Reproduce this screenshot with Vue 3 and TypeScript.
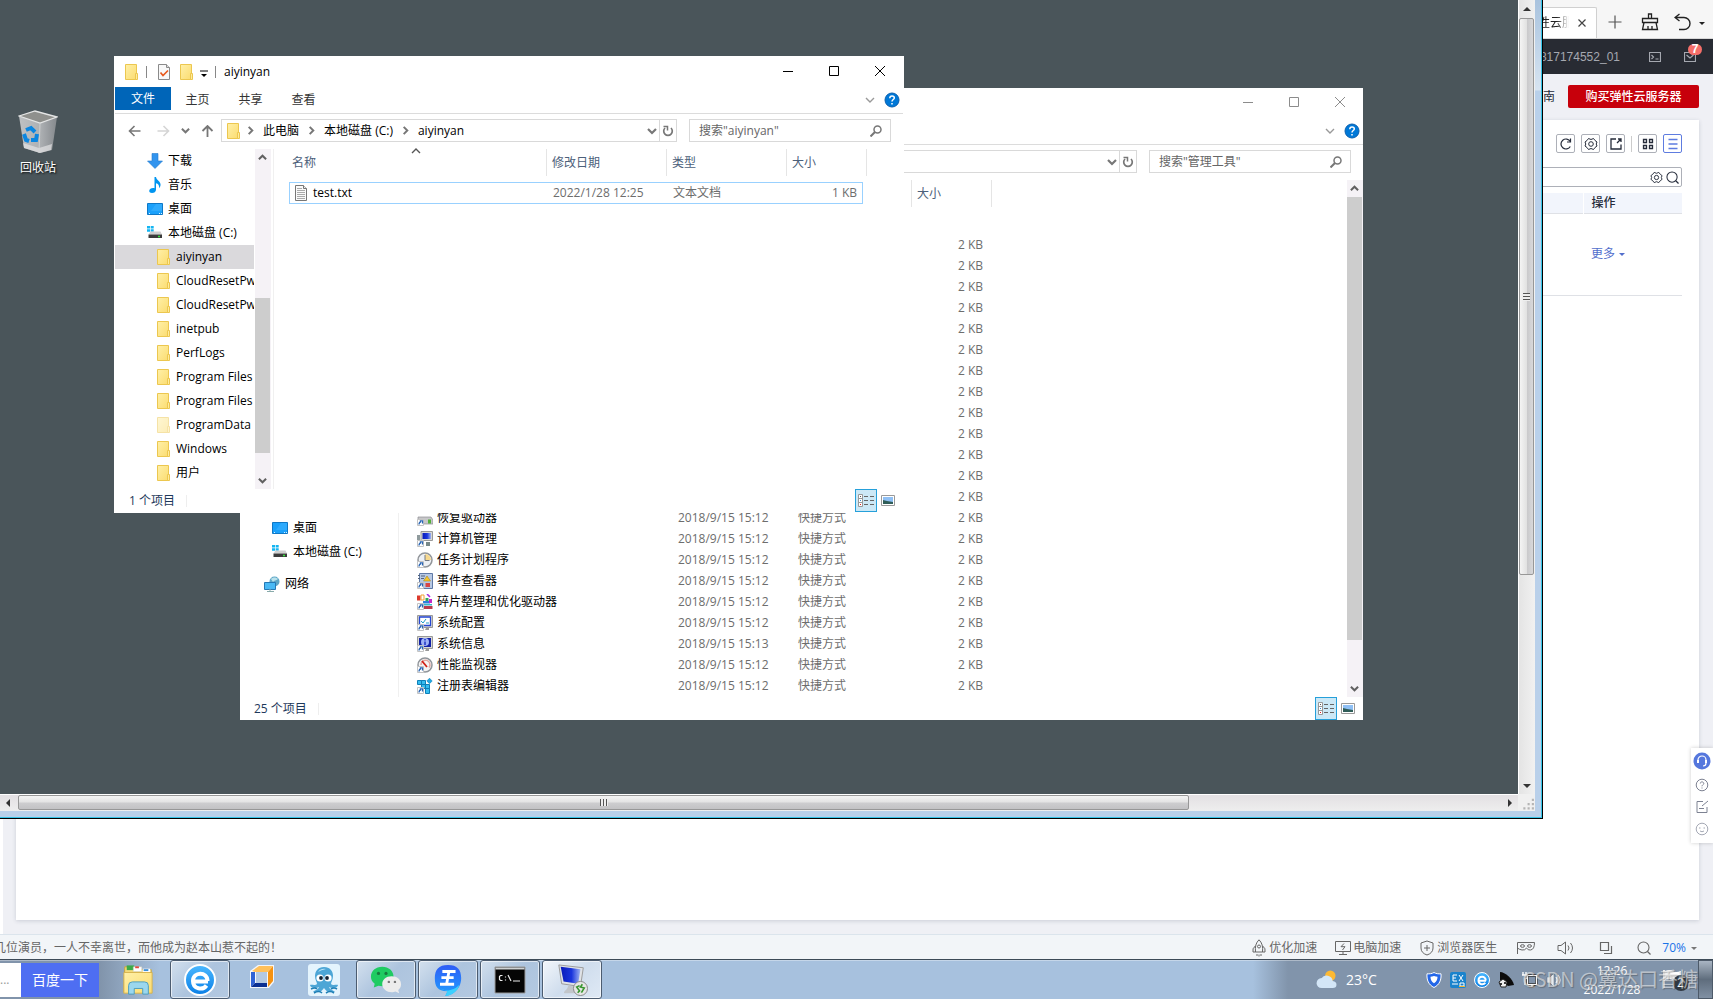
<script setup lang="ts">
interface NavItem {
  label: string
  icon: string
  level: 0 | 1 | 2
  selected?: boolean
  faded?: boolean
}
interface FileRow {
  name: string
  icon: string
  date: string
  type: string
  size: string
}
interface ExplorerWindow {
  id: string
  active: boolean
  title: string
  tabs: string[]
  crumbs: string[]
  search: string
  headers: string[]
  nav: NavItem[]
  rows: FileRow[]
  status: string
}

const folder = (label: string, extra: Partial<NavItem> = {}): NavItem => ({
  label, icon: 'folder', level: 2, ...extra,
})
const shortcut = (name: string, icon: string, minute = '12'): FileRow => ({
  name, icon, date: `2018/9/15 15:${minute}`, type: '快捷方式', size: '2 KB',
})
const sizeOnly = (): FileRow => ({ name: '', icon: '', date: '', type: '', size: '2 KB' })

const windows: ExplorerWindow[] = [
  {
    id: 'admin',
    active: false,
    title: '',
    tabs: [],
    crumbs: [],
    search: '搜索"管理工具"',
    headers: ['', '', '', '大小'],
    nav: [
      { label: '桌面', icon: 'desktop', level: 1 },
      { label: '本地磁盘 (C:)', icon: 'disk', level: 1 },
      { label: '网络', icon: 'network', level: 0 },
    ],
    rows: [
      ...Array.from({ length: 13 }, sizeOnly),
      shortcut('恢复驱动器', 'recovery'),
      shortcut('计算机管理', 'computer'),
      shortcut('任务计划程序', 'clock'),
      shortcut('事件查看器', 'event'),
      shortcut('碎片整理和优化驱动器', 'defrag'),
      shortcut('系统配置', 'config'),
      shortcut('系统信息', 'info', '13'),
      shortcut('性能监视器', 'gauge'),
      shortcut('注册表编辑器', 'registry'),
    ],
    status: '25 个项目',
  },
  {
    id: 'folder',
    active: true,
    title: 'aiyinyan',
    tabs: ['文件', '主页', '共享', '查看'],
    crumbs: ['此电脑', '本地磁盘 (C:)', 'aiyinyan'],
    search: '搜索"aiyinyan"',
    headers: ['名称', '修改日期', '类型', '大小'],
    nav: [
      { label: '下载', icon: 'download', level: 1 },
      { label: '音乐', icon: 'music', level: 1 },
      { label: '桌面', icon: 'desktop', level: 1 },
      { label: '本地磁盘 (C:)', icon: 'disk', level: 1 },
      folder('aiyinyan', { selected: true }),
      folder('CloudResetPwdAgent'),
      folder('CloudResetPwdUpdateAgent'),
      folder('inetpub'),
      folder('PerfLogs'),
      folder('Program Files'),
      folder('Program Files'),
      folder('ProgramData', { faded: true }),
      folder('Windows'),
      folder('用户'),
    ],
    rows: [{ name: 'test.txt', icon: 'text', date: '2022/1/28 12:25', type: '文本文档', size: '1 KB' }],
    status: '1 个项目',
  },
]

const apps = [
  { name: '资源管理器', icon: 'explorer', state: '' },
  { name: '浏览器', icon: 'ie', state: 'open' },
  { name: '虚拟机', icon: 'box', state: '' },
  { name: '章鱼', icon: 'octopus', state: '' },
  { name: '微信', icon: 'wechat', state: 'open' },
  { name: '王', icon: 'king', state: 'open' },
  { name: '命令提示符', icon: 'cmd', state: 'open' },
  { name: '远程桌面', icon: 'rdp', state: 'open current' },
]

const tools = [
  { name: '刷新', icon: 'reload' },
  { name: '设置', icon: 'hex' },
  { name: '导出', icon: 'export' },
]
const tray = ['t-shield', 't-ime', 'ie', 't-dish', 't-plug', 't-speaker']
</script>

<template>
  <svg class="defs" aria-hidden="true">
    <defs>
      <linearGradient id="g-folder" x1="0" y1="0" x2="1" y2="1"><stop offset="0" stop-color="#fff0a8" /><stop offset="1" stop-color="#fbdc70" /></linearGradient>
      <linearGradient id="g-blue" x1="0" y1="0" x2="0" y2="1"><stop offset="0" stop-color="#4bb8ff" /><stop offset="1" stop-color="#0a7fe6" /></linearGradient>
      <linearGradient id="g-king" x1="0" y1="0" x2="0" y2="1"><stop offset="0" stop-color="#2f5cf6" /><stop offset="1" stop-color="#1fa0ff" /></linearGradient>
      <linearGradient id="g-screen" x1="0" y1="0" x2="1" y2="0"><stop offset="0" stop-color="#0a1bb8" /><stop offset=".55" stop-color="#1a35dd" /><stop offset="1" stop-color="#9fb4f2" /></linearGradient>
      <linearGradient id="g-bin" x1="0" y1="0" x2="1" y2="0"><stop offset="0" stop-color="#bfc1c3" /><stop offset=".55" stop-color="#aeb1b4" /><stop offset="1" stop-color="#85898d" /></linearGradient>
    </defs>
    <symbol id="i-folder" viewBox="0 0 16 16"><path d="M2.5.5h11v15h-11z" fill="url(#g-folder)" stroke="#ecc74f" /><path d="M12.5 9.500h2v6h-2z" fill="#ffeb9c" stroke="#ecc74f" /></symbol>
    <symbol id="i-check" viewBox="0 0 16 16"><path d="M2.500.5h8l3 3v12h-11z" fill="#f8f8f8" stroke="#8a8a8a" /><path d="M10.500.5v3h3" fill="#ddd" stroke="#8a8a8a" /><path d="M4.500 8.500l2.500 3 5-5" fill="none" stroke="#e8591c" stroke-width="1.700" /></symbol>
    <symbol id="i-text" viewBox="0 0 16 16"><path d="M2.500.5h8l3 3v12h-11z" fill="#fafafa" stroke="#777" /><path d="M10.500.5v3h3" fill="#eee" stroke="#777" /><path d="M4 3.500h5M4 5.500h8M4 7.500h8M4 9.500h8M4 11.500h8M4 13.500h8" stroke="#aaa" /></symbol>
    <symbol id="i-download" viewBox="0 0 16 16"><path d="M5 0.500h6V8h4.500L8 15.500.5 8H5z" fill="#3294ee" stroke="#2478cc" stroke-width=".6" /></symbol>
    <symbol id="i-music" viewBox="0 0 16 16"><path d="M7.500 0h1.500c.4 3 4 4 4.500 7 .2 1.700-.3 3-1.300 4.200.2-3-1-4.500-3.200-5v6.500c0 2-1.800 3.300-4 3.300-1.600 0-2.800-.8-2.800-2 0-1.700 1.900-3 3.900-3 .6 0 1 .1 1.400.3z" fill="#0095f0" /></symbol>
    <symbol id="i-desktop" viewBox="0 0 16 16"><path d="M.5 2.500h15v11H.5z" fill="#1ba1fb" stroke="#0f78c6" /><path d="M2 12.500h1M12 12.500h1M14 12.500h1" stroke="#d9f2ff" /><path d="M9 3h6v7H4z" fill="#44b5ff" opacity=".5" /></symbol>
    <symbol id="i-disk" viewBox="0 0 16 16"><path d="M0 1h3v2.500H0zM3.700 1h3v2.500h-3zM0 4.200h3v2.500H0zM3.700 4.200h3v2.500h-3z" fill="#14b5f2" /><path d="M3.500 6.500h10L15 9.500H1.500z" fill="#d0d0d0" /><path d="M1.500 9.500h13.500v3.500H1.500z" fill="#3b3b3b" /><path d="M11 11.500h2" stroke="#37e83c" stroke-width="1.300" /></symbol>
    <symbol id="i-network" viewBox="0 0 16 16"><circle cx="10.500" cy="5.500" r="5" fill="#5da6c6" /><path d="M7 3c2-2 5-2 7 0-2 2-4 1-5 3" fill="#b8e1ec" /><path d="M.5 6.500h11v7H.5z" fill="#49b9f5" stroke="#2578b5" /><path d="M3 15.500h7M6 13v2" stroke="#8aa" /></symbol>
    <symbol id="s-link" viewBox="0 0 16 16"><path d="M.5 9.500h6v6h-6z" fill="#fff" stroke="#c3c3c3" /><path d="M2 14.500c0-1.500.5-2.500 2-2.700M2.800 10.800h2.700v2.700" fill="none" stroke="#2864b4" stroke-width="1.300" /></symbol>
    <symbol id="i-recovery" viewBox="0 0 16 16"><path d="M1 7h13l2 3v4H1z" fill="#c7c7c9" stroke="#8e8e92" stroke-width=".7" /><path d="M11 9.500h3v4h-3z" fill="#52b03b" /><use href="#s-link" /></symbol>
    <symbol id="i-computer" viewBox="0 0 16 16"><path d="M4 .5h11.500v9H4z" fill="#d9d9d4" stroke="#999" /><path d="M5.500 2h8.500v6H5.500z" fill="url(#g-screen)" /><path d="M0 4h3v5H0z" fill="#8f9b9d" /><path d="M9 11h4v4H9z" fill="#788" /><use href="#s-link" /></symbol>
    <symbol id="i-clock" viewBox="0 0 16 16"><circle cx="8" cy="8" r="7" fill="#eef1f5" stroke="#91959a" stroke-width="1.500" /><path d="M8 2a6 6 0 0 1 6 6H8z" fill="#f7d98e" /><path d="M8 3v5.500h4.500" fill="none" stroke="#757b83" /><use href="#s-link" /></symbol>
    <symbol id="i-event" viewBox="0 0 16 16"><path d="M2.500.5h13v15h-13z" fill="#b8c9e4" stroke="#5f79a6" /><path d="M4 3h4M4 5.500h3M1 2.500h2M1 5.500h2" stroke="#53647d" /><path d="M10 3l3.500 5h-7z" fill="#f5c62b" stroke="#a27a0a" stroke-width=".5" /><path d="M8.500 10h4.500v4H8.500z" fill="#d84545" /><use href="#s-link" /></symbol>
    <symbol id="i-defrag" viewBox="0 0 16 16"><path d="M0 1.500h3.500v5H0z" fill="#dc3a2c" /><path d="M4 1h3v5H4z" fill="#fff" stroke="#f1a332" /><path d="M8.500 4h3v3h-3z" fill="#32a65b" /><path d="M10 0l3 3" stroke="#a32fe0" stroke-width="1.600" /><path d="M6 7h7v2.500H6z" fill="#2e7fdb" /><path d="M12 5h3v4h-3z" fill="#c42bc8" /><path d="M7 10h8v1.500H7z" fill="#37b8c9" /><path d="M7 12h8.500v3H7z" fill="#b93b4d" /><use href="#s-link" /></symbol>
    <symbol id="i-config" viewBox="0 0 16 16"><path d="M.5.5h15v12H.5z" fill="#d9d9d4" stroke="#999" /><path d="M2.500 2h11v8.500h-11z" fill="#fff" stroke="#2546d2" stroke-width="1.300" /><path d="M4 6l2 2 3-4M9 8h3" fill="none" stroke="#1d9cc7" /><path d="M9 13h3v2H8z" fill="#999" /><use href="#s-link" /></symbol>
    <symbol id="i-info" viewBox="0 0 16 16"><path d="M.5.5h15v12H.5z" fill="#d9d9d4" stroke="#999" /><path d="M2 2h12v9H2z" fill="#1222a8" /><circle cx="8" cy="6" r="4" fill="#9db2f5" /><path d="M8 5.500v3.500M8 3v1.500" stroke="#1f33c4" stroke-width="1.500" /><path d="M9 13h3v2H8z" fill="#999" /><use href="#s-link" /></symbol>
    <symbol id="i-gauge" viewBox="0 0 16 16"><circle cx="8" cy="8" r="7" fill="#f4f4f4" stroke="#91959a" stroke-width="1.500" /><path d="M4 8a4.500 4.500 0 1 1 8 2.500" fill="none" stroke="#e2a7a0" stroke-width="1.500" /><path d="M5 4l5 6" stroke="#d21f15" stroke-width="1.800" /><use href="#s-link" /></symbol>
    <symbol id="i-registry" viewBox="0 0 16 16"><path d="M.5 2.500h4v4h-4zM4.500 2.500h4v4h-4zM8.500 6.500h4v4h-4zM8.500 10.500h4v5h-4zM4.500 6.500h4v4h-4z" fill="#35bdf0" stroke="#0d7fb8" /><path d="M12.500.2L15.200 3l-2.700 2.700L9.800 3z" fill="#1fa9e4" stroke="#0d7fb8" stroke-width=".6" /><use href="#s-link" /></symbol>
    <symbol id="i-bin" viewBox="0 0 40 44"><path d="M1 6L17 1l22 6-5 33-12 3-16-5z" fill="url(#g-bin)" /><path d="M1 6l16-5 22 6-17 6z" fill="#8f908d" stroke="#e4e5e5" stroke-width="1.300" /><path d="M5 33l16 5 13-4-1 6-11 3-16-5z" fill="#e2e3e4" opacity=".7" /><path d="M22 13l-1 30" stroke="#d3d5d6" stroke-width=".8" /><g fill="none" stroke="#0b86e0" stroke-width="4"><path d="M8 20l5-2 4 4" /><path d="M6 24l2 6 3 1" /><path d="M13 30h5l1-6" /></g></symbol>
    <symbol id="i-help" viewBox="0 0 16 16"><circle cx="8" cy="8" r="7" fill="#0078d7" stroke="#0a5fae" /><path d="M5.800 6.200c0-3 4.500-2.700 4.500-.3C10.300 7.500 8 7.600 8 9.500M8 11v1.500" fill="none" stroke="#fff" stroke-width="1.500" /></symbol>
    <symbol id="i-left" viewBox="0 0 12 12"><path d="M6 1L1 6l5 5M1 6h11" fill="none" stroke="currentColor" stroke-width="1.600" /></symbol>
    <symbol id="i-right" viewBox="0 0 12 12"><path d="M6 1l5 5-5 5M11 6H0" fill="none" stroke="currentColor" stroke-width="1.600" /></symbol>
    <symbol id="i-up" viewBox="0 0 12 12"><path d="M1 6l5-5 5 5M6 1v11" fill="none" stroke="currentColor" stroke-width="1.800" /></symbol>
    <symbol id="i-chev" viewBox="0 0 10 10"><path d="M1 3l4 4 4-4" fill="none" stroke="currentColor" stroke-width="1.400" /></symbol>
    <symbol id="i-chevb" viewBox="0 0 10 10"><path d="M1 3l4 4 4-4" fill="none" stroke="currentColor" stroke-width="2.200" /></symbol>
    <symbol id="i-refresh" viewBox="0 0 12 12"><path d="M9 3a4.300 4.300 0 1 1-6 0" fill="none" stroke="currentColor" stroke-width="1.700" /><path d="M1.500 1.500H5.500V5.500" fill="none" stroke="currentColor" stroke-width="1.500" /></symbol>
    <symbol id="i-find" viewBox="0 0 12 12"><circle cx="7.500" cy="4.500" r="3.500" fill="none" stroke="currentColor" stroke-width="1.500" /><path d="M5 7l-4.500 4.500" stroke="currentColor" stroke-width="2" /></symbol>
    <symbol id="i-list" viewBox="0 0 20 20"><path d="M2.500 3.500h4v12h-4zM2.500 7.500h4M2.500 11.500h4" fill="#fff" stroke="#999" /><path d="M4 5.500h1" stroke="#555" /><path d="M4 9.500h1" stroke="#38c" /><path d="M4 13.500h1" stroke="#d22" /><path d="M8 5.500h4M14 5.500h4M8 9.500h4M14 9.500h4M8 13.500h4M14 13.500h4" stroke="#666" /></symbol>
    <symbol id="i-thumb" viewBox="0 0 14 11"><path d="M.5.5h13v10H.5z" fill="#fff" stroke="#999" /><path d="M2 2h10v7H2z" fill="#8fc0f5" /><path d="M2 5l4 1 6 1v2H2z" fill="#2f5d58" /></symbol>
    <symbol id="i-explorer" viewBox="0 0 34 34"><path d="M3 3h8l2 3h18v24H2z" fill="#f6dc7b" stroke="#c9a438" /><path d="M5 1.500h8v5H5z" fill="#3cab48" /><path d="M12 3h9v5h-9z" fill="#fff" stroke="#ccb" stroke-width=".5" /><path d="M14 3.500h4" stroke="#e34a3c" stroke-width="2" /><path d="M22 5h8v4h-8z" fill="#fff" /><path d="M23 6.500h5" stroke="#3c8fd8" stroke-width="2" /><path d="M2 9h30v22H2z" fill="url(#g-folder)" stroke="#d5b14b" /><path d="M7 32V23q0-4 4-4h13q4 0 4 4v9h-6v-6H13v6z" fill="#9bd7ee" stroke="#4a9cbe" /></symbol>
    <symbol id="i-ie" viewBox="0 0 32 32"><circle cx="16" cy="16" r="15" fill="url(#g-blue)" stroke="#fff" stroke-width="2" /><path d="M24 17.500H9.500M23.500 17c0-10-14.500-9.500-14.500 0 0 8.500 10 9.500 13.500 4.500" fill="none" stroke="#fff" stroke-width="4" /></symbol>
    <symbol id="i-box" viewBox="0 0 32 32"><path d="M4 7l8-6h16v17l-5 6H4z" fill="#f4f6fa" /><path d="M10 8h11v11H10z" fill="#b4c9e2" /><path d="M6 7l7-5h14l-5 6H9z" fill="#ffc05a" /><path d="M27 2v15l-5 6V8z" fill="#f59212" /><path d="M5 8h4v11l-4 4z" fill="#2f62d5" /><path d="M5 23l4-4h12v4z" fill="#0b2f92" /></symbol>
    <symbol id="i-octopus" viewBox="0 0 32 32"><rect width="32" height="32" rx="3" fill="#e4f4fd" /><path d="M16 3c-6 0-9 4-9 9 0 4 2 6 2 8-2 2-6 0-7 1 0 3 6 4 9 2-1 3-4 3-6 5h7c2-1 3-3 4-4 1 1 2 3 4 4h7c-2-2-5-2-6-5 3 2 9 1 9-2-1-1-5 1-7-1 0-2 2-4 2-8 0-5-3-9-9-9z" fill="#4da6d6" /><path d="M10 8q3-4 8-3-5 1-8 3z" fill="#bfe6f7" /><circle cx="12" cy="14" r="3.600" fill="#fff" /><circle cx="20" cy="14" r="3.600" fill="#fff" /><circle cx="13" cy="14" r="1.900" fill="#123" /><circle cx="19" cy="14" r="1.900" fill="#123" /><path d="M3 25q4-2 6 0M23 25q3-2 6 0M6 29q5-3 8 0M18 29q4-3 8 0" fill="none" stroke="#1f7fb5" stroke-width="1.600" /></symbol>
    <symbol id="i-wechat" viewBox="0 0 34 30"><path d="M13 1C6 1 1 5.500 1 11.500c0 3 1.500 5.500 4 7.500L4 23l5-2c8 2 16-2 16-9.500C25 5.500 20 1 13 1z" fill="#1fcb62" /><circle cx="9" cy="8" r="1.700" fill="#177a3f" /><circle cx="17" cy="8" r="1.700" fill="#177a3f" /><path d="M23 11c-6 0-10 3.500-10 8.500S18 28 23 28c1.500 0 3-.3 4-.8l4 1.800-1-3.500c2-1.500 3-3.500 3-6C33 14.500 29 11 23 11z" fill="#ececec" /><circle cx="20" cy="17" r="1.300" fill="#777" /><circle cx="26.500" cy="17" r="1.300" fill="#777" /></symbol>
    <symbol id="i-king" viewBox="0 0 32 34"><path d="M16 1C6 1 2 6 2 15s3 14 13 14c0 2-1 3-2 5 6 0 17-6 17-19C30 6 26 1 16 1z" fill="url(#g-king)" /><path d="M8 26c5 4 15 2 20-4-1 6-8 12-15 12 1-2 2-3 2-5z" fill="#3bd0ff" /><path d="M10 8h14M9 14.500h13M7.500 21.500h15M17 8l-2.500 13.500" stroke="#fff" stroke-width="3" /></symbol>
    <symbol id="i-cmd" viewBox="0 0 32 28"><path d="M1 1h30v26H1z" fill="#050505" stroke="#999" /><path d="M1.500 1.500h29v2h-29z" fill="#cfd2d4" /><path d="M8.500 9.500H6.500l-1 1v3l1 1h2M11.500 10.500v1M11.500 13.500v1M14 9l3 6M19 15h7" fill="none" stroke="#eee" stroke-width="1.200" /></symbol>
    <symbol id="i-rdp" viewBox="0 0 34 34"><path d="M3 1l26 3-3 20L6 21z" fill="#dfe2e6" stroke="#999" /><path d="M5 3l21 2.500-2.500 15.500L8 18.500z" fill="url(#g-screen)" /><path d="M13 23l7 1 2 7H9c-2-2 3-3 4-8z" fill="#c2c6ca" /><circle cx="26" cy="26" r="7.500" fill="#e6e6e6" stroke="#888" /><path d="M25 23l-3 1.500 3 4-2 2M28 21.500l-2 3 4 1-3 5" fill="none" stroke="#38962f" stroke-width="1.700" /></symbol>
    <symbol id="i-t-shield" viewBox="0 0 16 16"><path d="M8 .5c2 1.200 4.500 1.500 7 1.300.5 6-1.500 11-7 13.700C2.500 12.800.5 7.800 1 1.800 3.500 2 6 1.700 8 .5z" fill="#2467e8" stroke="#fff" /><path d="M8 4c1.300.6 2.500.8 3.500.8 0 3-1 5-3.500 6.500C5.500 9.800 4.500 7.800 4.500 4.800 5.500 4.800 6.700 4.600 8 4z" fill="#fff" /></symbol>
    <symbol id="i-t-ime" viewBox="0 0 16 16"><rect width="16" height="16" rx="2" fill="#1b83cc" /><path d="M3 3h4M3 6h3M3 9h4M3 3v6M9 3l4 6M13 3L9 9M2 12h6M10 11h4v3h-4z" fill="none" stroke="#fff" /><path d="M9 14h6v1H9z" fill="#f8b62d" /></symbol>
    <symbol id="i-t-dish" viewBox="0 0 16 16"><path d="M2 0c5 0 13 7 14 13l-6 1-8-6z" fill="#0c0c0c" /><path d="M1 10l4-3 4 3-1 5H3z" fill="#eee" stroke="#222" /><circle cx="3" cy="12" r="1" /><circle cx="7" cy="11" r="1" /></symbol>
    <symbol id="i-t-plug" viewBox="0 0 16 16"><path d="M5.500 3.500h9v9h-9zM7 15h6M10 12v3" fill="none" stroke="#333" stroke-width="2.500" /><path d="M5.500 3.500h9v9h-9zM7 15h6M10 12v3" fill="none" stroke="#fff" stroke-width="1.200" /><path d="M1 0v3M4 0v3M0 3h5v3L3 7v6" fill="none" stroke="#fff" stroke-width="1.300" /></symbol>
    <symbol id="i-t-speaker" viewBox="0 0 16 16"><path d="M1 5h3l4-4v14l-4-4H1z" fill="#e9edf1" stroke="#567" stroke-width=".5" /><path d="M10 5q2 3 0 6M12 3q4 5 0 10" fill="none" stroke="#fff" stroke-width="1.200" /></symbol>
    <symbol id="i-weather" viewBox="0 0 22 20"><circle cx="15" cy="6" r="5.500" fill="#fdb932" /><path d="M6 19q-5 0-5.500-5Q1 9 6 8.500 8 5 12.500 6t5 5.500q4 .5 4 4T17.500 19z" fill="#d3e6f7" /></symbol>
    <symbol id="i-rocket" viewBox="0 0 16 18"><path d="M8 .8Q12.500 5 11.500 13h-7Q3.500 5 8 .8zM4.300 7Q1 9.500 2 13h2.500M11.700 7q3.300 2.500 2.300 6h-2.500M6 15v2M10 15v2M8 15.500v2" fill="none" stroke="currentColor" /><circle cx="8" cy="7.500" r="1.500" fill="none" stroke="currentColor" /></symbol>
    <symbol id="i-boost" viewBox="0 0 16 16"><path d="M.5 1.500h15v10H.5zM8 11.500v3M4 14.500h8M9 3.500l-3 3.200h4L7.500 10" fill="none" stroke="currentColor" /></symbol>
    <symbol id="i-doctor" viewBox="0 0 16 16"><path d="M8 1l6 2v5q0 5-6 7-6-2-6-7V3zM8 5v6M5 8h6" fill="none" stroke="currentColor" /></symbol>
    <symbol id="i-mask" viewBox="0 0 18 14"><path d="M.5 13V1.500h17q0 7-4 7.500Q11 9.500 9.500 7 8 9.500 5 9 2 8.500.5 7" fill="none" stroke="currentColor" /><ellipse cx="5.500" cy="5" rx="2" ry="1.300" fill="none" stroke="currentColor" /><ellipse cx="12.500" cy="5" rx="2" ry="1.300" fill="none" stroke="currentColor" /></symbol>
    <symbol id="i-sound" viewBox="0 0 18 14"><path d="M1 4.500h3L8.500 1v12L4 9.500H1zM11 4.500q2 2.500 0 5M13.500 2q4 5 0 10" fill="none" stroke="currentColor" /></symbol>
    <symbol id="i-squares" viewBox="0 0 18 14"><path d="M3.500 1.500h8v8h-8zM14.500 5v7.500H7" fill="none" stroke="currentColor" stroke-width="1.200" /></symbol>
    <symbol id="i-lens" viewBox="0 0 14 14"><circle cx="6.500" cy="6.500" r="5.500" fill="none" stroke="currentColor" stroke-width="1.100" /><path d="M10.500 10.500l3 3" stroke="currentColor" stroke-width="1.300" /></symbol>
    <symbol id="i-reload" viewBox="0 0 14 14"><path d="M11.300 9.500a5 5 0 1 1 0-5" fill="none" stroke="currentColor" stroke-width="1.200" /><path d="M11.500 1.500v3.500H8" fill="none" stroke="currentColor" stroke-width="1.200" /></symbol>
    <symbol id="i-hex" viewBox="0 0 14 14"><path d="M4.500 1.500L7 2.500l2.500-1 1.500 2 2 1.500-.8 2 .8 2-2 1.500-1.500 2-2.500-1-2.500 1L3 10.500 1 9l.8-2L1 5l2-1.500z" fill="none" stroke="currentColor" /><circle cx="7" cy="7" r="2.300" fill="none" stroke="currentColor" /></symbol>
    <symbol id="i-export" viewBox="0 0 14 14"><path d="M7 2H2v10h10V7.500M12 5V2H9M12 2L8 6" fill="none" stroke="currentColor" stroke-width="1.300" /></symbol>
    <symbol id="i-grid" viewBox="0 0 14 14"><path d="M2.500 2.500h3v3h-3zM8.500 2.500h3v3h-3zM2.500 8.500h3v3h-3zM8.500 8.500h3v3h-3z" fill="none" stroke="currentColor" stroke-width="1.300" /></symbol>
    <symbol id="i-lines" viewBox="0 0 14 14"><path d="M2.500 2.500h9M2.500 7h9M2.500 11.500h9" stroke="currentColor" stroke-width="1.300" /></symbol>
    <symbol id="i-broom" viewBox="0 0 18 18"><path d="M7.500 5.500V1h3v4.500M1.500 5.500h15v4h-15zM3 9.500L1.500 16.500h15L15 9.500M7 13v3.500M11 13v3.500" fill="none" stroke="currentColor" stroke-width="1.300" /></symbol>
    <symbol id="i-undo" viewBox="0 0 18 18"><path d="M5.500 1L1 4.500 5.500 8M1 4.500h9a6 6 0 0 1 0 12H5" fill="none" stroke="currentColor" stroke-width="1.400" /></symbol>
    <symbol id="i-console" viewBox="0 0 12 10"><path d="M.5.5h11v9H.5zM2.500 3l2 2-2 2M6.500 7h3" fill="none" stroke="currentColor" stroke-width="1.200" /></symbol>
    <symbol id="i-mail" viewBox="0 0 12 10"><path d="M.5.5h11v9H.5zM2.500 3L6 6l3.500-3" fill="none" stroke="currentColor" stroke-width="1.200" /></symbol>
    <symbol id="i-service" viewBox="0 0 18 18"><circle cx="9" cy="9" r="8.500" fill="#5577dd" /><path d="M5 11V8a4 4 0 0 1 8 0v3q0 3-3 3" fill="none" stroke="#fff" stroke-width="1.200" /><path d="M4 8h2v3H4zM12 8h2v3h-2z" fill="#fff" /></symbol>
    <symbol id="i-ask" viewBox="0 0 14 14"><circle cx="7" cy="7" r="5.800" fill="none" stroke="currentColor" /><path d="M5.300 5.500c0-2.300 3.500-2 3.500 0C8.800 6.700 7 6.800 7 8.300M7 9.500v1" fill="none" stroke="currentColor" /></symbol>
    <symbol id="i-note" viewBox="0 0 14 14"><path d="M8 1.500H2v11h10V7M4 8.500h5M7 6l6-5" fill="none" stroke="currentColor" /></symbol>
    <symbol id="i-smile" viewBox="0 0 14 14"><circle cx="7" cy="7" r="5.800" fill="none" stroke="currentColor" /><path d="M4 6h1.500M8.500 6H10M5 9q2 1.500 4 0" fill="none" stroke="currentColor" /></symbol>
    <symbol id="i-flag" viewBox="0 0 30 22"><path d="M2 1v18" stroke="#eee" stroke-width="2" /><path d="M3 2q5-2 8 0t8 0v9q-4 2-8 0t-8 0z" fill="#fff" /><circle cx="19" cy="14" r="8" fill="#303943" /></symbol>
  </svg>

  <div class="screen">
    <section class="browser">
      <header class="tabstrip">
        <div class="page-tab">
          <span class="tab-name">性云服</span>
          <button class="plain tab-close" aria-label="关闭标签"><svg viewBox="0 0 10 10"><path d="M1.500 1.500l7 7M8.500 1.500l-7 7" stroke="#444" stroke-width="1.200" /></svg></button>
        </div>
        <button class="plain strip-btn add" aria-label="新标签"><svg viewBox="0 0 14 14"><path d="M7 0.500v13M.5 7h13" stroke="#555" stroke-width="1.200" /></svg></button>
        <button class="plain strip-btn" aria-label="清理"><svg><use href="#i-broom" /></svg></button>
        <button class="plain strip-btn" aria-label="撤销"><svg><use href="#i-undo" /></svg></button>
        <i class="caret dark"></i>
      </header>
      <div class="topbar">
        <span>817174552_01</span>
        <button class="plain" aria-label="控制台"><svg><use href="#i-console" /></svg></button>
        <button class="plain mail" aria-label="消息"><svg><use href="#i-mail" /></svg><b>7</b></button>
      </div>
      <main class="page">
        <div class="page-actions">
          <a href="#" class="guide">南</a>
          <button class="buy">购买弹性云服务器</button>
        </div>
        <div class="panel">
          <div class="toolset">
            <button v-for="t in tools" :key="t.icon" :aria-label="t.name"><svg><use :href="`#i-${t.icon}`" /></svg></button>
            <i class="bar"></i>
            <button aria-label="卡片"><svg><use href="#i-grid" /></svg></button>
            <button class="on" aria-label="列表"><svg><use href="#i-lines" /></svg></button>
          </div>
          <div class="filter">
            <input type="text" aria-label="筛选" />
            <svg><use href="#i-hex" /></svg>
            <svg><use href="#i-lens" /></svg>
          </div>
          <table class="servers">
            <thead><tr><td></td><th>操作</th></tr></thead>
            <tbody><tr><td></td><td><a href="#">更多<i class="caret"></i></a></td></tr></tbody>
          </table>
        </div>
        <aside class="helper">
          <button class="plain big" aria-label="客服"><svg><use href="#i-service" /></svg></button>
          <button class="plain" aria-label="帮助"><svg><use href="#i-ask" /></svg></button>
          <button class="plain" aria-label="建议"><svg><use href="#i-note" /></svg></button>
          <button class="plain faint" aria-label="评价"><svg><use href="#i-smile" /></svg></button>
        </aside>
      </main>
      <footer class="statusbar">
        <a href="#" class="news">几位演员，一人不幸离世，而他成为赵本山惹不起的！</a>
        <div class="status-tools">
          <button class="plain"><svg class="tall"><use href="#i-rocket" /></svg>优化加速</button>
          <button class="plain"><svg><use href="#i-boost" /></svg>电脑加速</button>
          <button class="plain"><svg><use href="#i-doctor" /></svg>浏览器医生</button>
        </div>
        <div class="status-icons">
          <button class="plain" aria-label="无痕"><svg><use href="#i-mask" /></svg></button>
          <button class="plain" aria-label="声音"><svg><use href="#i-sound" /></svg></button>
          <button class="plain" aria-label="窗口"><svg><use href="#i-squares" /></svg></button>
          <button class="plain zoom"><svg><use href="#i-lens" /></svg>70%<i class="caret"></i></button>
        </div>
      </footer>
    </section>

    <section class="remote">
      <div class="desktop">
        <button class="plain bin"><svg><use href="#i-bin" /></svg>回收站</button>

        <article v-for="w in windows" :key="w.id" class="win" :class="[w.id, { active: w.active }]">
          <header class="titlebar">
            <div v-if="w.title" class="quick">
              <svg><use href="#i-folder" /></svg><i class="sep"></i>
              <svg class="chk"><use href="#i-check" /></svg><svg><use href="#i-folder" /></svg>
              <svg class="drop" viewBox="0 0 8 8"><path d="M0 1h8" stroke="#000" /><path d="M1 4h6L4 7z" /></svg>
              <i class="sep"></i><span>{{ w.title }}</span>
            </div>
            <div class="controls">
              <button class="plain" aria-label="最小化"><svg viewBox="0 0 10 10"><path d="M0 5.500h10" /></svg></button>
              <button class="plain" aria-label="最大化"><svg viewBox="0 0 10 10"><path d="M.5.5h9v9h-9z" /></svg></button>
              <button class="plain" aria-label="关闭"><svg viewBox="0 0 10 10"><path d="M0 0l10 10M10 0L0 10" /></svg></button>
            </div>
          </header>
          <nav class="ribbon">
            <button v-for="(t, i) in w.tabs" :key="t" class="plain tab" :class="{ file: i === 0 }">{{ t }}</button>
            <svg class="fold"><use href="#i-chev" /></svg>
            <button class="plain" aria-label="帮助"><svg class="help"><use href="#i-help" /></svg></button>
          </nav>
          <div class="address">
            <div class="arrows">
              <template v-if="w.crumbs.length">
                <button class="plain" aria-label="后退"><svg><use href="#i-left" /></svg></button>
                <button class="plain off" aria-label="前进"><svg><use href="#i-right" /></svg></button>
                <button class="plain tiny" aria-label="历史"><svg><use href="#i-chevb" /></svg></button>
                <button class="plain" aria-label="向上"><svg><use href="#i-up" /></svg></button>
              </template>
            </div>
            <div class="path">
              <svg v-if="w.crumbs.length" class="ico"><use href="#i-folder" /></svg>
              <template v-for="c in w.crumbs" :key="c">
                <svg class="next"><use href="#i-chevb" /></svg><button class="plain">{{ c }}</button>
              </template>
              <button class="plain more" aria-label="展开"><svg><use href="#i-chevb" /></svg></button>
              <button class="plain again" aria-label="刷新"><svg><use href="#i-refresh" /></svg></button>
            </div>
            <label class="search">
              <input type="text" :placeholder="w.search" :aria-label="w.search" />
              <svg><use href="#i-find" /></svg>
            </label>
          </div>
          <div class="body">
            <div class="tree">
              <div class="tree-items">
                <a v-for="(n, i) in w.nav" :key="i" href="#" :class="[`l${n.level}`, { selected: n.selected, faded: n.faded }]">
                  <svg><use :href="`#i-${n.icon}`" /></svg>{{ n.label }}
                </a>
              </div>
              <div v-if="w.active" class="vbar">
                <svg class="flip"><use href="#i-chevb" /></svg><i></i><svg><use href="#i-chevb" /></svg>
              </div>
            </div>
            <div class="files">
              <svg v-if="w.active" class="sort"><use href="#i-chev" /></svg>
              <table>
                <colgroup><col class="c-name" /><col class="c-mid" /><col class="c-mid" /><col class="c-size" /><col class="c-end" /></colgroup>
                <thead>
                  <tr><th v-for="(h, i) in w.headers" :key="i" :colspan="i === 3 ? 2 : 1">{{ h }}</th></tr>
                </thead>
                <tbody>
                  <tr v-for="(r, i) in w.rows" :key="i">
                    <td class="name"><span v-if="r.name"><svg><use :href="`#i-${r.icon}`" /></svg>{{ r.name }}</span></td>
                    <td>{{ r.date }}</td>
                    <td>{{ r.type }}</td>
                    <td class="size">{{ r.size }}</td>
                    <td class="end"></td>
                  </tr>
                </tbody>
              </table>
            </div>
            <div v-if="!w.active" class="vbar">
              <svg class="flip"><use href="#i-chevb" /></svg><i></i><svg><use href="#i-chevb" /></svg>
            </div>
          </div>
          <footer class="foot">
            <span>{{ w.status }}</span>
            <button class="details" aria-label="详细信息"><svg><use href="#i-list" /></svg></button>
            <button class="plain" aria-label="缩略图"><svg class="thumb"><use href="#i-thumb" /></svg></button>
          </footer>
        </article>
      </div>
      <div class="aero v">
        <i class="arrow up"></i><div class="thumb"><i></i></div><i class="arrow down"></i>
      </div>
      <div class="aero h">
        <i class="arrow left"></i><div class="thumb"><i></i></div><i class="arrow right"></i>
      </div>
      <svg class="grip" viewBox="0 0 16 16"><path d="M13 5.500h2M9 9.500h2M13 9.500h2M5 13.500h2M9 13.500h2M13 13.500h2" stroke="#b5b5b5" stroke-width="2" /></svg>
    </section>

    <footer class="taskbar">
      <input class="ask" type="text" value="..." aria-label="搜索" />
      <button class="baidu">百度一下</button>
      <div class="apps">
        <button v-for="a in apps" :key="a.icon" class="app" :class="a.state" :aria-label="a.name"><svg><use :href="`#i-${a.icon}`" /></svg></button>
      </div>
      <div class="tray">
        <svg class="weather"><use href="#i-weather" /></svg><span class="temp">23°C</span>
        <div class="tray-icons"><svg v-for="t in tray" :key="t"><use :href="`#i-${t}`" /></svg></div>
        <time>12:26<br />2022/1/28</time>
        <div class="notice"><svg><use href="#i-flag" /></svg><b>2</b></div>
        <button class="show" aria-label="显示桌面"></button>
      </div>
      <span class="mark">CSDN @翼达口香糖</span>
    </footer>
  </div>
</template>

<style>
html, body { margin: 0; overflow: hidden; }
</style>

<style scoped>
.screen, .screen * { box-sizing: border-box; }
.screen {
  position: relative;
  display: flex;
  flex-direction: column;
  height: 100vh;
  overflow: hidden;
  font: 12px/16px "Open Sans", "Noto Sans CJK SC", sans-serif;
  color: #000;
}
.defs { position: absolute; width: 0; height: 0; }
svg { display: block; flex: none; width: 16px; height: 16px; }
button, input { font: inherit; color: inherit; }
.plain { border: 0; padding: 0; background: none; display: flex; align-items: center; justify-content: center; }
a { color: inherit; text-decoration: none; }
.caret { flex: none; width: 0; height: 0; border: 3px solid transparent; border-top-color: currentColor; border-bottom: 0; }

/* browser */
.browser { flex: 1; display: flex; flex-direction: column; min-height: 0; font-family: "Liberation Sans", "Noto Sans CJK SC", sans-serif; }
.tabstrip { height: 39px; display: flex; align-items: center; justify-content: flex-end; padding: 6px 8px 0 0; background: #f6f6f6; border-bottom: 1px solid #d8d8d8; color: #222; }
.page-tab { align-self: flex-end; height: 31px; width: 240px; display: flex; align-items: center; justify-content: flex-end; gap: 8px; padding-right: 9px; background: #fff; border: 1px solid #d0d0d0; border-bottom: 0; border-radius: 2px 2px 0 0; }
.tab-name { width: 31px; overflow: hidden; white-space: nowrap; -webkit-mask-image: linear-gradient(90deg, #000 60%, transparent); mask-image: linear-gradient(90deg, #000 60%, transparent); }
.tab-close svg { width: 10px; height: 10px; }
.strip-btn { width: 33px; height: 30px; }
.strip-btn svg { width: 18px; height: 18px; }
.strip-btn.add { width: 36px; }
.strip-btn.add svg { width: 14px; height: 14px; }
.caret.dark { margin-top: 2px; }
.topbar { height: 35px; display: flex; align-items: center; justify-content: flex-end; gap: 23px; padding-right: 17px; background: #282b33; color: #a5a8b0; }
.topbar span { margin-right: 6px; }
.topbar svg { width: 12px; height: 10px; }
.mail { position: relative; }
.mail b { position: absolute; left: 4px; top: -8px; width: 14px; height: 11px; border-radius: 6px; background: #f66f6a; color: #fff; font-size: 12px; line-height: 11px; }
.page { position: relative; flex: 1; min-height: 0; display: flex; flex-direction: column; padding: 11px 14px 14px 13px; border-left: 3px solid #fff; background: #eff0f5; color: #252b3a; }
.page-actions { display: flex; justify-content: flex-end; align-items: center; gap: 13px; margin-bottom: 12px; }
.buy { width: 131px; height: 23px; border: 0; border-radius: 2px; padding: 0; background: #c7000b; color: #fff; font-weight: 500; }
.panel { flex: 1; padding: 14px 17px; background: #fff; box-shadow: 0 1px 4px rgba(40, 50, 80, .18); }
.toolset { display: flex; justify-content: flex-end; align-items: center; gap: 6px; }
.toolset button { width: 19px; height: 19px; padding: 0; display: flex; align-items: center; justify-content: center; border: 1px solid #adb0b8; border-radius: 2px; background: #fff; }
.toolset svg { width: 14px; height: 14px; }
.toolset .on { border-color: #5e7ce0; color: #5e7ce0; }
.toolset .bar { width: 1px; height: 16px; background: #ccc; }
.filter { display: flex; align-items: center; gap: 3px; height: 20px; margin: 14px 0 6px; padding-right: 2px; border: 1px solid #adb0b8; border-radius: 2px; }
.filter input { flex: 1; border: 0; padding: 0; outline: 0; background: none; height: 16px; }
.filter svg { width: 13px; height: 13px; }
.servers { width: 100%; table-layout: fixed; border-collapse: collapse; }
.servers td:last-child, .servers th { width: 99px; padding: 0 0 0 8px; text-align: left; font-weight: 400; }
.servers thead tr { height: 20px; background: #f2f5fc; border-bottom: 1px solid #dfe1e6; }
.servers th { border-left: 1px solid #fff; font-weight: 500; }
.servers tbody tr { height: 82px; border-bottom: 1px solid #dfe1e6; }
.servers a { display: flex; align-items: center; gap: 4px; color: #526ecc; }
.helper { position: absolute; right: 0; bottom: 91px; width: 22px; height: 95px; display: flex; flex-direction: column; align-items: center; gap: 8px; padding-top: 4px; background: #fff; box-shadow: 0 0 4px rgba(0, 0, 0, .2); color: #7d8292; }
.helper svg { width: 14px; height: 14px; }
.helper .big svg { width: 18px; height: 18px; }
.helper .faint { color: #a5a9b5; }
.statusbar { height: 25px; display: flex; align-items: center; padding: 2px 16px 0 0; border-top: 1px solid #dbe4ec; background: #f2f5f8; color: #666; }
.news { margin: 0 auto 0 -6px; white-space: nowrap; }
.status-tools { display: flex; gap: 18px; margin-right: 20px; }
.status-tools button { gap: 2px; white-space: nowrap; }
.status-tools .tall { height: 18px; }
.status-icons { display: flex; gap: 22px; }
.status-icons svg { width: 18px; height: 14px; }
.status-icons .zoom { color: #1a73e8; gap: 5px; font-family: "Open Sans", sans-serif; }
.status-icons .zoom svg { width: 14px; margin-right: 6px; color: #666; }
.status-icons .caret { color: #777; }

/* remote desktop client */
.remote {
  position: absolute;
  left: 0;
  top: 0;
  right: 170px;
  bottom: 180px;
  display: grid;
  grid-template: 1fr 17px / 1fr 17px;
  padding: 0 7px 7px 0;
  border: solid #000;
  border-width: 0 1px 1px 0;
  background: linear-gradient(#a9c3de, #d7e4f1 90px, #b9d0ea 91px);
  box-shadow: inset -1px -1px #35c4e8;
}
.desktop { position: relative; overflow: hidden; background: #4a555a; }
.bin { position: absolute; left: 8px; top: 110px; width: 60px; flex-direction: column; gap: 6px; color: #fff; text-shadow: 1px 1px 2px #000; }
.bin svg { width: 40px; height: 44px; }
.aero { display: flex; align-items: center; background: #ededee; }
.aero.v { flex-direction: column; border-left: 1px solid #fff; background: linear-gradient(90deg, #e4e4e4, #f1f1f1); }
.aero.h { border-top: 1px solid #fff; background: linear-gradient(#e3e0e3, #eee); }
.aero .thumb { border: 1px solid #979797; border-radius: 2px; display: flex; align-items: center; justify-content: center; }
.aero.v .thumb { align-self: flex-start; width: 15px; flex: 556; background: linear-gradient(90deg, #f4f4f4, #e2e2e2 50%, #c8c8ca 51%, #d8d8da); }
.aero.h .thumb { align-self: flex-start; height: 15px; flex: 1170; background: linear-gradient(#f4f4f4, #e4e4e4 45%, #cdcdcf 55%, #c2c2c4); }
.aero.v .thumb i { width: 7px; height: 8px; background: repeating-linear-gradient(#555 0 1px, #eee 1px 3px); }
.aero.h .thumb i { width: 8px; height: 7px; background: repeating-linear-gradient(90deg, #555 0 1px, #eee 1px 3px); }
.arrow { width: 0; height: 0; border: 4px solid transparent; }
.arrow.up { border-bottom-color: #333; margin: 3px 0 7px; }
.v .arrow.down { border-top-color: #333; margin: 209px 0 2px; }
.arrow.left { border-right-color: #333; margin: 0 8px 0 2px; }
.h .arrow.right { border-left-color: #333; margin: 0 2px 0 319px; }
.grip { background: #f0f0f0; width: 17px; height: 17px; }

/* explorer windows */
.win { position: absolute; display: flex; flex-direction: column; background: #fff; }
.admin { left: 240px; top: 88px; width: 1123px; height: 632px; }
.folder { left: 114px; top: 56px; width: 790px; height: 457px; border: 1px solid #fff; }
.titlebar { height: 30px; display: flex; justify-content: flex-end; align-items: center; }
.quick { flex: 1; display: flex; align-items: center; padding-left: 8px; }
.quick .chk { margin: 0 6px 0 9px; }
.quick .drop { width: 8px; height: 8px; margin: 3px 7px 0 6px; }
.quick .sep { width: 1px; height: 12px; margin-left: 7px; background: #888; }
.quick .drop + .sep { margin: 0 8px 0 0; }
.controls { display: flex; align-self: flex-start; }
.controls button { width: 46px; height: 28px; }
.controls svg { width: 10px; height: 10px; fill: none; stroke: #8c8c8c; overflow: visible; }
.active .controls svg { stroke: #000; }
.ribbon { height: 27px; display: flex; align-items: center; justify-content: flex-end; padding-right: 3px; border-bottom: 1px solid #dcdcdc; color: #333; }
.tab { height: 26px; width: 53px; }
.tab.file { align-self: flex-start; height: 23px; width: 56px; background: #0065b8; color: #fff; }
.fold { width: 10px; height: 10px; margin: 0 9px 0 auto; color: #999; }
.ribbon .help { width: 16px; height: 16px; }
.address { height: 35px; display: flex; padding: 5px 12px 7px 0; color: #777; }
.arrows { width: 106px; display: flex; align-items: center; gap: 11px; padding-left: 13px; }
.arrows svg { width: 13px; height: 12px; }
.arrows .tiny svg { width: 9px; height: 9px; }
.arrows .off { color: #d5d5d5; margin-left: 5px; }
.path { flex: 1; display: flex; align-items: center; height: 23px; padding-left: 3px; border: 1px solid #d9d9d9; }
.path .next { width: 9px; height: 9px; margin: 0 8px 0 5px; transform: rotate(-90deg); }
.path .next + button { margin-right: 3px; color: #000; white-space: nowrap; }
.path .more { margin: 0 2px 0 auto; }
.more svg { width: 10px; height: 10px; }
.again { width: 17px; height: 21px; }
.path .again { border-left: 1px solid #d9d9d9; }
.again svg { width: 12px; height: 12px; }
.search { width: 202px; height: 23px; display: flex; align-items: center; margin-left: 12px; padding: 0 8px 0 9px; border: 1px solid #d9d9d9; }
.search input { flex: 1; min-width: 0; height: 20px; padding: 0; border: 0; outline: 0; background: none; }
.search input::placeholder { color: #666; opacity: 1; }
.search svg { width: 12px; height: 12px; }
.body { flex: 1; display: flex; min-height: 0; }
.tree { width: 159px; display: flex; border-right: 1px solid #f0f0f0; }
.tree-items { width: 139px; margin-right: 1px; overflow: hidden; }
.admin .tree-items { padding-top: 336px; }
.tree a { display: flex; align-items: center; gap: 5px; height: 24px; padding-left: 32px; white-space: nowrap; }
.tree a.l0 { padding-left: 24px; margin-top: 8px; }
.tree a.l2 { padding-left: 40px; }
.tree a.selected { background: #dad9dc; }
.tree a.faded svg { opacity: .5; }
.vbar { width: 16px; display: flex; flex-direction: column; align-items: center; background: #f5f2f6; color: #606060; padding: 4px 1px 4px 0; }
.vbar svg { width: 9px; height: 9px; }
.vbar .flip { transform: scaleY(-1); }
.vbar i { width: 15px; background: #cdcdcd; flex: 1; margin: 4px 0 44px; }
.tree .vbar i { margin: 136px 0 23px; }
.files { position: relative; flex: 1; padding-left: 15px; }
.admin .files { padding-left: 13px; }
.files .sort { position: absolute; left: 137px; top: -3px; width: 10px; height: 10px; transform: scaleY(-1); color: #555; }
.files table { width: 578px; table-layout: fixed; border-spacing: 0; color: #6d6d6d; }
.admin .files table { width: 580px; }
.c-mid { width: 120px; }
.c-size { width: 76px; }
.c-end { width: 4px; }
.files th { height: 27px; padding: 0 0 0 5px; border-right: 1px solid #e5e5e5; text-align: left; font-weight: 400; color: #4c607a; }
.files th:first-child { padding-left: 3px; }
.files td { height: 21px; padding: 0 0 0 6px; white-space: nowrap; }
.files td.name { color: #000; padding-left: 5px; }
.name span { display: flex; align-items: center; gap: 4px; }
.files .size { text-align: right; padding: 0 5px 0 0; }
.files td.end { padding: 0; }
.files tbody::before { content: ""; display: block; height: 6px; }
.admin .files tbody::before { height: 27px; }
.folder .files td { height: 22px; }
.folder .files td:not(.end) { border: solid #99d1ff; border-width: 1px 0; }
.folder .files td.name { border-left-width: 1px; padding-left: 3px; }
.folder .files td.size { border-right-width: 1px; }
.foot { height: 23px; display: flex; align-items: center; gap: 4px; padding: 0 8px 0 14px; color: #1e395b; }
.foot span { margin-right: auto; padding-right: 11px; line-height: 12px; border-right: 1px solid #eee; }
.details { width: 22px; height: 23px; padding: 0; border: 1px solid #26a0da; background: #cce8f6; }
.details svg { width: 20px; height: 20px; }
.foot .thumb { width: 14px; height: 11px; }

/* taskbar */
.taskbar { position: relative; height: 40px; display: flex; align-items: center; border-top: 1px solid #3d4a57; background: linear-gradient(90deg, #8194ab 100px, #a7c1de 160px, #a7c1de calc(100% - 460px), #8194ab calc(100% - 425px)); box-shadow: inset 0 1px rgba(255, 255, 255, .35); }
.ask { width: 21px; height: 34px; border: 0; padding: 0; background: #fff; color: #999; }
.baidu { width: 78px; height: 34px; border: 0; padding: 0; background: #4e6ef2; color: #fff; font-size: 14px; }
.apps { display: flex; gap: 2px; margin-left: 9px; align-self: stretch; }
.app { width: 60px; display: flex; align-items: center; justify-content: center; border: 1px solid transparent; border-radius: 3px; padding: 0; background: none; }
.app svg { width: 32px; height: 32px; }
.app.open { border-color: #4c5c70; background: linear-gradient(135deg, #d3e0ee, #adc4de 50%, #b4c9e1); box-shadow: inset 0 0 0 1px rgba(255, 255, 255, .6); }
.app.current { background: linear-gradient(135deg, #f2f6fb, #cfdded 50%, #dfe9f5); }
.tray { flex: 1; display: flex; align-items: center; justify-content: flex-end; align-self: stretch; color: #fff; }
.weather { width: 21px; height: 19px; margin-right: 9px; }
.temp { width: 80px; font-size: 14px; }
.tray-icons { display: flex; gap: 8px; }
.tray time { width: 90px; margin: 0 5px; text-align: center; line-height: 19px; }
.notice { position: relative; margin-right: 6px; }
.notice svg { width: 30px; height: 22px; }
.notice b { position: absolute; left: 15px; top: 6px; font-weight: 400; }
.show { width: 15px; align-self: stretch; padding: 0; border: 1px solid #4d5a69; background: linear-gradient(#a9b5c3, #5f6d7d 50%, #8090a3); }
.mark { position: absolute; right: 15px; top: 5px; font-family: "Noto Sans CJK SC", sans-serif; font-size: 20px; line-height: 28px; color: rgba(235, 235, 235, .6); text-shadow: 1px 1px 1px rgba(60, 60, 60, .4); white-space: nowrap; }
</style>
